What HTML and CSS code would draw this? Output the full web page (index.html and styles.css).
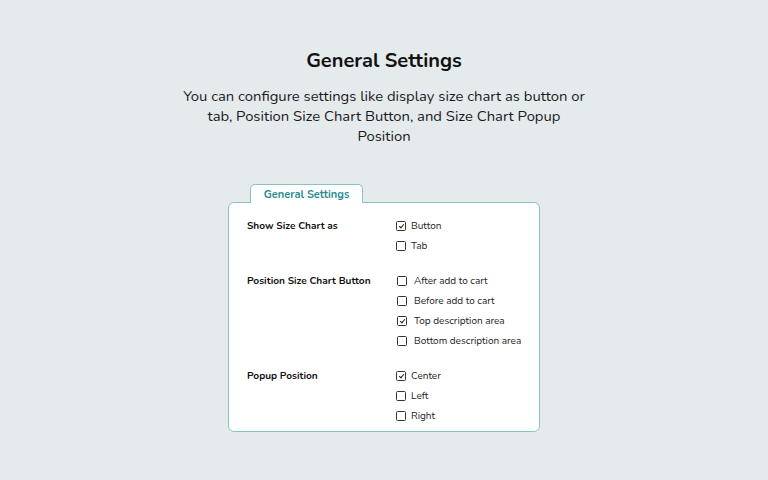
FILE: index.html
```html
<!DOCTYPE html>
<html>
<head>
<meta charset="utf-8">
<link rel="stylesheet" href="styles.css">
</head>
<body>
<div class="page">
  <header class="intro">
    <h1 class="title">General Settings</h1>
    <p class="subtitle">You can configure settings like display size chart as button or<br>tab, Position Size Chart Button, and Size Chart Popup<br>Position</p>
  </header>
  <section class="panel">
    <div class="tab">General Settings</div>
    <div class="card">
      <div class="group">
        <div class="label">Show Size Chart as</div>
        <div class="options">
          <div class="opt"><span class="box checked"></span>Button</div>
          <div class="opt"><span class="box"></span>Tab</div>
        </div>
      </div>
      <div class="group">
        <div class="label">Position Size Chart Button</div>
        <div class="options wide">
          <div class="opt"><span class="box"></span>After add to cart</div>
          <div class="opt"><span class="box"></span>Before add to cart</div>
          <div class="opt"><span class="box checked"></span>Top description area</div>
          <div class="opt"><span class="box"></span>Bottom description area</div>
        </div>
      </div>
      <div class="group">
        <div class="label">Popup Position</div>
        <div class="options">
          <div class="opt"><span class="box checked"></span>Center</div>
          <div class="opt"><span class="box"></span>Left</div>
          <div class="opt"><span class="box"></span>Right</div>
        </div>
      </div>
    </div>
  </section>
</div>
</body>
</html>
```
FILE: styles.css
```css
* { box-sizing: border-box; }
html, body { margin: 0; padding: 0; }
body {
  background: #e5eaed;
  font-family: "Nunito", Lato, "Noto Sans", sans-serif;
  color: #111;
  width: 768px;
  height: 480px;
  overflow: hidden;
}
.page {
  display: flex;
  flex-direction: column;
  align-items: center;
  padding-top: 48px;
}
.intro { text-align: center; }
.title {
  margin: 0;
  font-size: 20px;
  line-height: 26px;
  font-weight: 700;
  color: #111;
}
.subtitle {
  margin: 12px auto 0;
  width: 430px;
  font-size: 14.8px;
  line-height: 20px;
  color: #1a1a1a;
}
.panel {
  margin-top: 38px;
  width: 312px;
  display: flex;
  flex-direction: column;
}
.tab {
  align-self: flex-start;
  margin-left: 22px;
  width: 113px;
  height: 19px;
  border: 1px solid #86c3c3;
  border-bottom: none;
  border-radius: 5px 5px 0 0;
  background: #fff;
  color: #2a8d8f;
  font-size: 11px;
  font-weight: 700;
  line-height: 19px;
  text-align: center;
  position: relative;
  z-index: 1;
  margin-bottom: -1px;
}
.card {
  background: #fff;
  border: 1px solid #86c3c3;
  border-radius: 6px;
  padding: 13px 0 5px 18px;
  display: flex;
  flex-direction: column;
  gap: 15px;
}
.group {
  display: grid;
  grid-template-columns: 149px 1fr;
}
.label {
  font-size: 10.1px;
  font-weight: 700;
  line-height: 20px;
}
.opt {
  display: flex;
  align-items: center;
  height: 20px;
  font-size: 10px;
  color: #222;
}
.box {
  width: 10px;
  height: 10px;
  border: 1px solid #333;
  border-radius: 1.5px;
  margin-right: 5px;
  position: relative;
  flex: none;
}
.wide .box { margin-left: 1px; margin-right: 7px; }
.box.checked::after {
  content: "";
  position: absolute;
  left: 2.5px;
  top: 1px;
  width: 2px;
  height: 4px;
  border-right: 1.2px solid #222;
  border-bottom: 1.2px solid #222;
  transform: rotate(40deg);
}
```
